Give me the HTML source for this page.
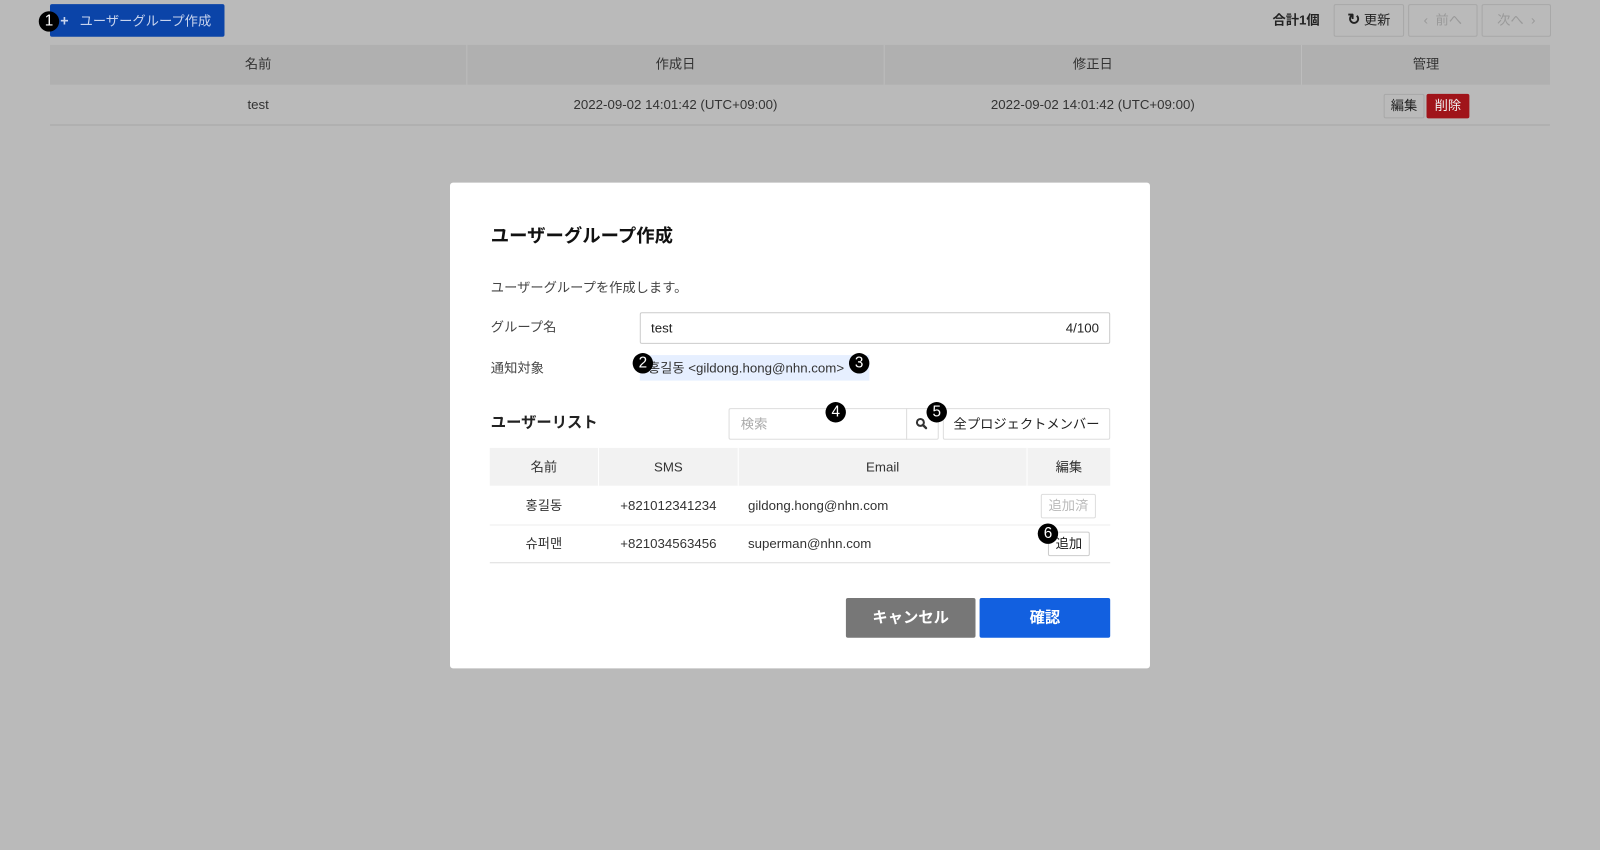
<!DOCTYPE html>
<html><head><meta charset="utf-8"><style>
*{box-sizing:border-box;margin:0;padding:0}
body{width:1600px;height:850px;background:#bababa;font-family:"Liberation Sans","Noto Sans CJK JP",sans-serif;font-size:13px;line-height:18px;color:#333;position:relative;overflow:hidden}
#w{position:absolute;left:0;top:0;width:1568px;height:833px;transform:scale(1.0204);transform-origin:0 0}
.abs{position:absolute}
.num{position:absolute;width:20px;height:20px;border-radius:50%;background:#000;color:#fff;font-size:15px;line-height:20px;text-align:center;z-index:5}
.btn{position:absolute;border:1px solid #a8a8a8;border-radius:2px;text-align:center}
.c{position:absolute;text-align:center}
</style></head><body><div id="w">
<div class="abs" style="left:49px;top:4px;width:171px;height:32px;background:#0b44a8;border-radius:2px;color:#c8d4ee;font-size:13px;line-height:32px;padding-left:10px"><b style="font-size:14px">+</b>&nbsp;&nbsp; ユーザーグループ作成</div>
<div class="num" style="left:38px;top:11px">1</div>
<div class="abs" style="left:1247px;top:11px;font-weight:bold;font-size:13px;color:#222">合計1個</div>
<div class="btn" style="left:1307px;top:4px;width:69px;height:32px;line-height:30px;color:#222"><b style="font-size:15px">↻</b> 更新</div>
<div class="btn" style="left:1380px;top:4px;width:68px;height:32px;line-height:30px;color:#999">‹ &nbsp;前へ</div>
<div class="btn" style="left:1452px;top:4px;width:68px;height:32px;line-height:30px;color:#999">次へ &nbsp;›</div>
<div class="abs" style="left:49px;top:44px;width:1470px;height:39px;background:#b0b0b0"></div>
<div class="abs" style="left:457px;top:44px;width:1px;height:39px;background:#bdbdbd"></div>
<div class="abs" style="left:866px;top:44px;width:1px;height:39px;background:#bdbdbd"></div>
<div class="abs" style="left:1275px;top:44px;width:1px;height:39px;background:#bdbdbd"></div>
<div class="c" style="left:49px;width:408px;top:54px">名前</div>
<div class="c" style="left:458px;width:408px;top:54px">作成日</div>
<div class="c" style="left:867px;width:408px;top:54px">修正日</div>
<div class="c" style="left:1276px;width:243px;top:54px">管理</div>
<div class="c" style="left:49px;width:408px;top:94px">test</div>
<div class="c" style="left:458px;width:408px;top:94px">2022-09-02 14:01:42 (UTC+09:00)</div>
<div class="c" style="left:867px;width:408px;top:94px">2022-09-02 14:01:42 (UTC+09:00)</div>
<div class="btn" style="left:1356px;top:92px;width:40px;height:24px;line-height:22px;color:#222">編集</div>
<div class="abs" style="left:1398px;top:92px;width:42px;height:24px;line-height:24px;background:#a0141a;color:#eee;border-radius:2px;text-align:center">削除</div>
<div class="abs" style="left:49px;top:122px;width:1470px;height:1px;background:#a8a8a8"></div>

<div class="abs" style="left:441px;top:179px;width:686px;height:476px;background:#fff;border-radius:3px"></div>
<div class="abs" style="left:481px;top:219px;font-size:18px;line-height:24px;font-weight:bold;color:#111">ユーザーグループ作成</div>
<div class="abs" style="left:481px;top:273px;color:#444">ユーザーグループを作成します。</div>
<div class="abs" style="left:481px;top:312px;color:#444">グループ名</div>
<div class="abs" style="left:627px;top:306px;width:461px;height:31px;border:1px solid #ccc;border-radius:2px;padding:0 10px;line-height:29px;color:#222">test<span style="float:right">4/100</span></div>
<div class="abs" style="left:481px;top:352px;color:#444">通知対象</div>
<div class="abs" style="left:627px;top:348px;width:225px;height:25px;background:#e6efff;line-height:25px;padding-left:8px;color:#333">홍길동 &lt;gildong.hong@nhn.com&gt;</div>
<div class="num" style="left:620px;top:346px">2</div>
<div class="num" style="left:832px;top:346px">3</div>
<div class="abs" style="left:481px;top:405px;font-size:15px;line-height:20px;font-weight:bold;color:#222">ユーザーリスト</div>
<div class="abs" style="left:714px;top:400px;width:206px;height:31px;border:1px solid #ddd;border-radius:2px"></div>
<div class="abs" style="left:726px;top:407px;color:#aaa">検索</div>
<div class="abs" style="left:888px;top:400px;width:1px;height:31px;background:#ddd"></div>
<svg class="abs" style="left:897px;top:409px" width="12" height="12" viewBox="0 0 12 12"><circle cx="5" cy="5" r="3.4" fill="none" stroke="#333" stroke-width="2"/><path d="M7.5 7.5L10.5 10.5" stroke="#333" stroke-width="2.4" stroke-linecap="round"/></svg>
<div class="btn" style="left:924px;top:400px;width:164px;height:31px;line-height:29px;border-color:#ddd;color:#222">全プロジェクトメンバー</div>
<div class="num" style="left:809px;top:394px">4</div>
<div class="num" style="left:908px;top:394px">5</div>
<div class="abs" style="left:480px;top:439px;width:608px;height:37px;background:#f2f2f2"></div>
<div class="abs" style="left:586px;top:439px;width:1px;height:37px;background:#fff"></div>
<div class="abs" style="left:723px;top:439px;width:1px;height:37px;background:#fff"></div>
<div class="abs" style="left:1006px;top:439px;width:1px;height:37px;background:#fff"></div>
<div class="c" style="left:480px;width:106px;top:449px">名前</div>
<div class="c" style="left:587px;width:136px;top:449px">SMS</div>
<div class="c" style="left:724px;width:282px;top:449px">Email</div>
<div class="c" style="left:1007px;width:81px;top:449px">編集</div>
<div class="c" style="left:480px;width:106px;top:487px">홍길동</div>
<div class="c" style="left:587px;width:136px;top:487px">+821012341234</div>
<div class="abs" style="left:733px;top:487px">gildong.hong@nhn.com</div>
<div class="btn" style="left:1020px;top:484px;width:54px;height:24px;line-height:22px;border-color:#ddd;color:#bbb">追加済</div>
<div class="abs" style="left:480px;top:514px;width:608px;height:1px;background:#eee"></div>
<div class="c" style="left:480px;width:106px;top:524px">슈퍼맨</div>
<div class="c" style="left:587px;width:136px;top:524px">+821034563456</div>
<div class="abs" style="left:733px;top:524px">superman@nhn.com</div>
<div class="btn" style="left:1027px;top:521px;width:41px;height:24px;line-height:22px;border-color:#ccc;color:#222">追加</div>
<div class="num" style="left:1017px;top:513px">6</div>
<div class="abs" style="left:480px;top:551px;width:608px;height:1px;background:#ddd"></div>
<div class="abs" style="left:829px;top:586px;width:127px;height:39px;background:#777;color:#fff;font-size:15px;font-weight:bold;line-height:39px;text-align:center;border-radius:2px">キャンセル</div>
<div class="abs" style="left:960px;top:586px;width:128px;height:39px;background:#1260e0;color:#fff;font-size:15px;font-weight:bold;line-height:39px;text-align:center;border-radius:2px">確認</div>
</div></body></html>
